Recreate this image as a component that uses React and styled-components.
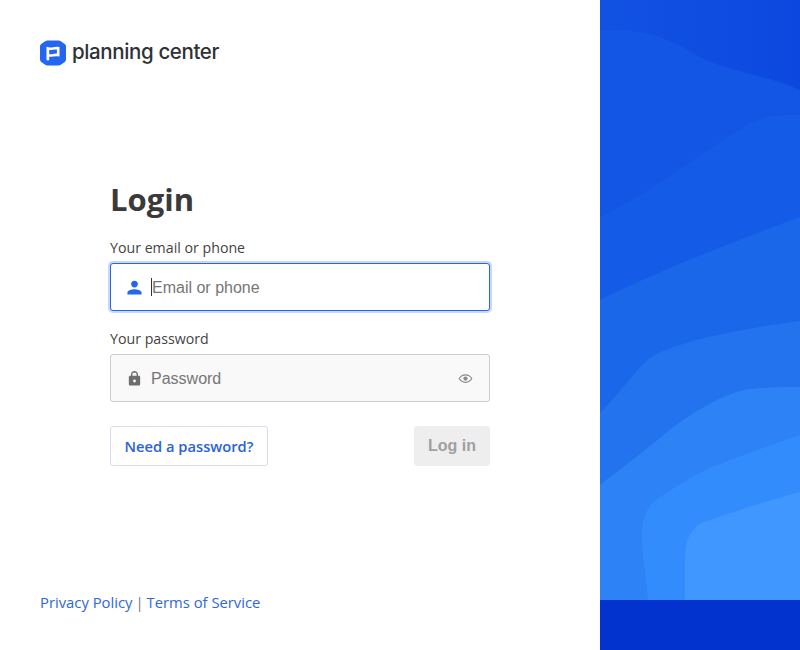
import React from 'react';
import styled, { createGlobalStyle } from 'styled-components';

const GlobalStyle = createGlobalStyle`
  html, body {
    margin: 0;
    padding: 0;
    background: #fff;
  }
  * {
    box-sizing: border-box;
  }
`;

const Logo = () => (
  <LogoRow>
    <svg width="26" height="26" viewBox="0 0 26 26">
      <path
        d="M7.500 0.500 H18.500 Q19.800 0.500 20.800 1.200 L24.800 4 Q26 4.900 26 6.400 V19.600 Q26 21.100 24.800 22 L20.800 24.800 Q19.800 25.500 18.500 25.500 H7.500 Q6.200 25.500 5.200 24.800 L1.200 22 Q0 21.100 0 19.600 V6.400 Q0 4.900 1.200 4 L5.200 1.200 Q6.200 0.500 7.500 0.500 Z"
        fill="#2266f1"
      />
      <path
        d="M6.500 6.800 Q9.800 8 13 7.200 Q16.400 6.400 19.500 7 V16.400 Q16.400 15.800 13 16.600 Q11.200 17 9.200 16.800 V20.200 H6.500 Z M9.200 9.800 V14.300 Q11 14.500 13 14 Q15 13.500 16.900 13.600 V9.500 Q15 9.300 13 9.800 Q11 10.300 9.200 9.800 Z"
        fill="#fff"
      />
    </svg>
    <LogoText>planning center</LogoText>
  </LogoRow>
);

const Waves = () => (
  <WaveSvg viewBox="0 0 200 600" preserveAspectRatio="none">
    <defs>
      <linearGradient id="waveBase" x1="0" y1="0" x2="1" y2="0">
        <stop offset="0" stopColor="#1252e3" />
        <stop offset="1" stopColor="#0c48df" />
      </linearGradient>
    </defs>
    <rect width="200" height="600" fill="url(#waveBase)" />
    <path d="M0 30 C50 28 75 42 100 57 C130 72 170 76 200 90 V600 H0 Z" fill="#1355e4" />
    <path d="M0 217 C55 190 105 150 150 123 C165 116 180 114 200 115 V600 H0 Z" fill="#145be7" />
    <path d="M0 300 C60 270 130 243 200 217 V600 H0 Z" fill="#1b67ea" />
    <path d="M0 413 C20 393 35 370 50 358 C70 344 130 330 200 321 V600 H0 Z" fill="#2373ef" />
    <path d="M0 485 C25 465 50 447 67 432 C90 414 125 392 150 389 C170 387 185 387 200 387 V600 H0 Z" fill="#2d82f6" />
    <path d="M48 600 C46 575 42 555 42 532 C43 515 48 505 60 497 C75 487 95 475 110 468 C140 456 170 445 200 435 V600 Z" fill="#338cfc" />
    <path d="M85 600 V560 C85 540 90 528 104 522 C135 511 170 500 200 492 V600 Z" fill="#3f97ff" />
  </WaveSvg>
);

export default function App() {
  return (
    <Page>
      <GlobalStyle />
      <LeftColumn>
        <Logo />
        <FormArea>
          <Title>Login</Title>
          <Label>Your email or phone</Label>
          <InputBox $focused>
            <InputIcon viewBox="0 0 24 24" $color="#2266f1">
              <path d="M12 12c2.700 0 4.800-2.100 4.800-4.800S14.700 2.400 12 2.400 7.200 4.500 7.200 7.200 9.300 12 12 12zm0 2.300c-3.200 0-10 1.600-10 4.800V22h20v-2.900c0-3.200-6.800-4.800-10-4.800z" />
            </InputIcon>
            <Caret />
            <Placeholder>Email or phone</Placeholder>
          </InputBox>
          <Label>Your password</Label>
          <InputBox>
            <InputIcon viewBox="0 0 24 24" $color="#6e6e6e">
              <path d="M18 8h-1V6.500C17 3.700 14.800 1.500 12 1.500S7 3.700 7 6.500V8H6c-1.100 0-2 .9-2 2v10c0 1.100.9 2 2 2h12c1.100 0 2-.9 2-2V10c0-1.100-.9-2-2-2zm-6 9.500c-1.100 0-2-.9-2-2s.9-2 2-2 2 .9 2 2-.9 2-2 2zM15 8H9V6.500c0-1.700 1.300-3 3-3s3 1.300 3 3V8z" />
            </InputIcon>
            <Placeholder>Password</Placeholder>
            <EyeIcon viewBox="0 0 24 24">
              <path d="M12 5C7 5 2.700 8.100 1 12c1.700 3.900 6 7 11 7s9.300-3.100 11-7c-1.700-3.900-6-7-11-7zm0 12c-3.900 0-7.300-2-9-5 1.700-3 5.100-5 9-5s7.300 2 9 5c-1.700 3-5.100 5-9 5z" />
              <circle cx="12" cy="12" r="3.400" />
            </EyeIcon>
          </InputBox>
          <ActionRow>
            <SecondaryButton>Need a password?</SecondaryButton>
            <SubmitButton disabled>Log in</SubmitButton>
          </ActionRow>
        </FormArea>
        <Footer>
          <FooterLink>Privacy Policy</FooterLink>
          <Divider>|</Divider>
          <FooterLink>Terms of Service</FooterLink>
        </Footer>
      </LeftColumn>
      <RightPanel>
        <Waves />
        <PanelBar />
      </RightPanel>
    </Page>
  );
}

const Page = styled.div`
  display: flex;
  width: 800px;
  height: 650px;
  overflow: hidden;
  font-family: "Open Sans", "Noto Sans", sans-serif;
  color: #3a3a3a;
`;

const LeftColumn = styled.div`
  display: flex;
  flex-direction: column;
  width: 600px;
  height: 650px;
  padding: 39px 40px 0;
`;

const LogoRow = styled.div`
  display: flex;
  align-items: center;
  gap: 6px;
  height: 28px;
`;

const LogoText = styled.span`
  margin-bottom: 3px;
  font-family: "Inter", sans-serif;
  font-size: 20.500px;
  font-weight: 500;
  letter-spacing: -0.38px;
  color: #2f3136;
`;

const FormArea = styled.div`
  display: flex;
  flex-direction: column;
  width: 380px;
  margin: 111px 0 0 70px;
`;

const Title = styled.h1`
  margin: 0 0 18px;
  font-size: 31px;
  line-height: 42px;
  font-weight: 700;
  color: #3a3a3a;
`;

const Label = styled.label`
  font-size: 14.200px;
  line-height: 20px;
  margin-bottom: 5px;
  color: #444;
`;

const InputBox = styled.div`
  display: flex;
  align-items: center;
  height: 48px;
  padding: 0 16px 0 15px;
  margin-bottom: 18px;
  border-radius: 3px;
  border: 1px solid ${(p) => (p.$focused ? '#2a64e0' : '#cccccc')};
  background: ${(p) => (p.$focused ? '#fff' : '#f9f9f9')};
  box-shadow: ${(p) => (p.$focused ? '0 0 0 2px #c7d9fb' : 'none')};
  font-family: "Liberation Sans", Arial, sans-serif;
`;

const InputIcon = styled.svg`
  width: 17px;
  height: 17px;
  margin-right: 8px;
  fill: ${(p) => p.$color};
  flex-shrink: 0;
`;

const Caret = styled.span`
  width: 1px;
  height: 18px;
  background: #333;
`;

const Placeholder = styled.span`
  flex: 1;
  padding-top: 2px;
  font-size: 16px;
  color: #767676;
`;

const EyeIcon = styled.svg`
  width: 15px;
  height: 15px;
  fill: #8a8a8a;
`;

const ActionRow = styled.div`
  display: flex;
  justify-content: space-between;
  margin-top: 6px;
`;

const SecondaryButton = styled.button`
  width: 158px;
  height: 40px;
  padding: 0;
  border: 1px solid #d5dcf0;
  border-radius: 3px;
  background: #fff;
  font-family: "Open Sans", "Noto Sans", sans-serif;
  font-size: 14.700px;
  font-weight: 600;
  color: #2a62dc;
`;

const SubmitButton = styled.button`
  width: 76px;
  height: 40px;
  border: none;
  border-radius: 4px;
  background: #eeeeee;
  font-family: "Liberation Sans", Arial, sans-serif;
  font-size: 16px;
  font-weight: 700;
  color: #a0a0a0;
`;

const Footer = styled.div`
  display: flex;
  align-items: center;
  gap: 3px;
  margin-top: auto;
  margin-bottom: 38px;
  font-size: 14.800px;
  line-height: 20px;
`;

const FooterLink = styled.a`
  color: #2f68d6;
`;

const Divider = styled.span`
  color: #777;
`;

const RightPanel = styled.div`
  display: flex;
  flex-direction: column;
  width: 200px;
  height: 650px;
`;

const WaveSvg = styled.svg`
  display: block;
  width: 200px;
  height: 600px;
`;

const PanelBar = styled.div`
  height: 50px;
  background: #0333cf;
`;
